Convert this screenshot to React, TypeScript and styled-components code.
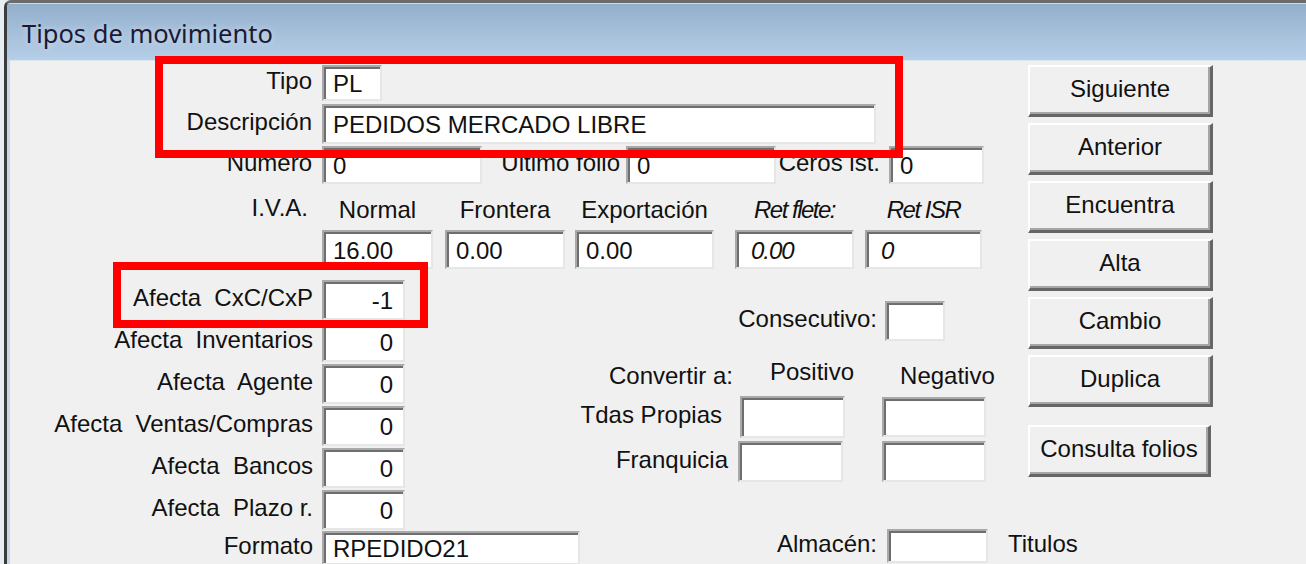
import React from "react";
import styled, { createGlobalStyle, css } from "styled-components";

const GlobalStyle = createGlobalStyle`
  html, body {
    margin: 0;
    padding: 0;
    background: #e9eef3;
  }
  #root {
    width: 1306px;
    height: 564px;
    overflow: hidden;
  }
`;

const Window = styled.div`
  margin-left: 4px;
  width: 1302px;
  height: 564px;
  overflow: hidden;
  border-top: 3px solid #6b6b6b;
  border-left: 3px solid #3c3c3c;
  border-top-left-radius: 7px;
  background: #c9d8e8;
  box-sizing: border-box;
  display: flex;
  flex-direction: column;
`;

const TitleBar = styled.div`
  height: 57px;
  flex: none;
  display: flex;
  align-items: center;
  padding-left: 15px;
  padding-top: 2px;
  box-sizing: border-box;
  background: linear-gradient(#93afcc, #a7c1dc 55%, #b6cee7);
  border-top: 1px solid #cdd9e6;
  font-family: "Noto Sans", "Open Sans", sans-serif;
  font-size: 25.5px;
  color: #1a1a36;
  text-shadow: 0 0 6px rgba(255, 255, 255, 0.5);
`;

const Body = styled.div`
  flex: 1;
  margin-left: 3px;
  background: #f0f0f0;
  border-top: 1px solid #dde6ef;
  display: flex;
  position: relative;
  font-family: "Liberation Sans", Arial, sans-serif;
  font-size: 24px;
  color: #111111;
`;

const FormArea = styled.div`
  width: 1018px;
  flex: none;
  display: flex;
  flex-direction: column;
`;

const Row = styled.div<{ $h: number; $mt?: number }>`
  display: flex;
  align-items: center;
  height: ${(p) => p.$h}px;
  margin-top: ${(p) => p.$mt ?? 0}px;
  flex: none;
`;

const Label = styled.div<{ $w: number; $ml?: number; $mr?: number; $dy?: number }>`
  width: ${(p) => p.$w}px;
  margin-left: ${(p) => p.$ml ?? 0}px;
  margin-right: ${(p) => p.$mr ?? 0}px;
  text-align: right;
  white-space: pre;
  flex: none;
  position: relative;
  top: ${(p) => p.$dy ?? -2}px;
`;

const Plain = styled.div<{ $ml?: number; $dy?: number }>`
  margin-left: ${(p) => p.$ml ?? 0}px;
  white-space: pre;
  flex: none;
  position: relative;
  top: ${(p) => p.$dy ?? -2}px;
`;

const Field = styled.div<{
  $w: number;
  $h?: number;
  $ml?: number;
  $right?: boolean;
  $italic?: boolean;
}>`
  width: ${(p) => p.$w}px;
  height: ${(p) => p.$h ?? 40}px;
  margin-left: ${(p) => p.$ml ?? 0}px;
  flex: none;
  box-sizing: border-box;
  background: #ffffff;
  border-top: 2px solid #a9a9a9;
  border-left: 2px solid #a9a9a9;
  border-right: 2px solid #e6e6e6;
  border-bottom: 2px solid #e6e6e6;
  box-shadow: inset 2px 2px 0 #6e6e6e;
  display: flex;
  align-items: center;
  justify-content: ${(p) => (p.$right ? "flex-end" : "flex-start")};
  padding: 2px ${(p) => (p.$right ? 10 : 0)}px 0 ${(p) => (p.$right ? 0 : 9)}px;
  white-space: pre;
  overflow: hidden;
  ${(p) =>
    p.$italic &&
    css`
      font-style: italic;
      letter-spacing: -1px;
      padding-left: 14px;
    `}
`;

const IvaBlock = styled.div`
  display: flex;
  margin-top: 10px;
  flex: none;
`;

const IvaColumn = styled.div<{ $w: number; $ml?: number }>`
  width: ${(p) => p.$w}px;
  margin-left: ${(p) => p.$ml ?? 0}px;
  display: flex;
  flex-direction: column;
  align-items: center;
  flex: none;
`;

const IvaHead = styled.div<{ $italic?: boolean }>`
  height: 32px;
  margin-bottom: 4px;
  display: flex;
  align-items: center;
  white-space: pre;
  ${(p) =>
    p.$italic &&
    css`
      font-style: italic;
      letter-spacing: -1.5px;
    `}
`;

const IvaLabelCell = styled.div`
  width: 298px;
  margin-right: 14px;
  height: 32px;
  display: flex;
  align-items: center;
  justify-content: flex-end;
`;

const Lower = styled.div`
  display: flex;
  margin-top: 10px;
  flex: none;
`;

const LeftCol = styled.div`
  width: 570px;
  flex: none;
  display: flex;
  flex-direction: column;
`;

const RightCol = styled.div`
  width: 430px;
  flex: none;
  display: flex;
  flex-direction: column;
`;

const ButtonCol = styled.div`
  display: flex;
  flex-direction: column;
  gap: 6px;
  padding-top: 4px;
`;

const Button = styled.div<{ $mt?: number; $w?: number }>`
  width: ${(p) => p.$w ?? 185}px;
  height: 52px;
  margin-top: ${(p) => p.$mt ?? 0}px;
  box-sizing: border-box;
  background: #f0f0f0;
  border-top: 2px solid #ffffff;
  border-left: 2px solid #ffffff;
  border-right: 3px solid #666666;
  border-bottom: 3px solid #666666;
  box-shadow: inset -2px -2px 0 #a6a6a6;
  display: flex;
  align-items: center;
  justify-content: center;
  padding-bottom: 4px;
  white-space: pre;
`;

const Annotation = styled.div<{ $x: number; $y: number; $w: number; $h: number }>`
  position: absolute;
  left: ${(p) => p.$x}px;
  top: ${(p) => p.$y}px;
  width: ${(p) => p.$w}px;
  height: ${(p) => p.$h}px;
  box-sizing: border-box;
  border: 8px solid #ff0000;
  pointer-events: none;
`;

const afectaRows: [string, string][] = [
  ["Afecta  CxC/CxP", "-1"],
  ["Afecta  Inventarios", "0"],
  ["Afecta  Agente", "0"],
  ["Afecta  Ventas/Compras", "0"],
  ["Afecta  Bancos", "0"],
  ["Afecta  Plazo r.", "0"],
];

const buttons = ["Siguiente", "Anterior", "Encuentra", "Alta", "Cambio", "Duplica"];

export default function App() {
  return (
    <>
      <GlobalStyle />
      <Window>
        <TitleBar>Tipos de movimiento</TitleBar>
        <Body>
          <FormArea>
            <Row $h={36} $mt={4}>
              <Label $w={302} $mr={10}>Tipo</Label>
              <Field $w={60} $h={36}>PL</Field>
            </Row>
            <Row $h={40} $mt={3}>
              <Label $w={302} $mr={10}>Descripción</Label>
              <Field $w={554}>PEDIDOS MERCADO LIBRE</Field>
            </Row>
            <Row $h={38} $mt={2}>
              <Label $w={302} $mr={10}>Número</Label>
              <Field $w={160} $h={38}>0</Field>
              <Label $w={138} $mr={6}>Ultimo folio</Label>
              <Field $w={150} $h={38}>0</Field>
              <Label $w={104} $mr={9}>Ceros ist.</Label>
              <Field $w={95} $h={38}>0</Field>
            </Row>
            <IvaBlock>
              <IvaLabelCell>
                <Plain>I.V.A.</Plain>
              </IvaLabelCell>
              <IvaColumn $w={111}>
                <IvaHead>Normal</IvaHead>
                <Field $w={111} $h={39}>16.00</Field>
              </IvaColumn>
              <IvaColumn $w={120} $ml={12}>
                <IvaHead>Frontera</IvaHead>
                <Field $w={120} $h={39}>0.00</Field>
              </IvaColumn>
              <IvaColumn $w={139} $ml={10}>
                <IvaHead>Exportación</IvaHead>
                <Field $w={139} $h={39}>0.00</Field>
              </IvaColumn>
              <IvaColumn $w={119} $ml={21}>
                <IvaHead $italic>Ret flete:</IvaHead>
                <Field $w={119} $h={39} $italic>0.00</Field>
              </IvaColumn>
              <IvaColumn $w={117} $ml={11}>
                <IvaHead $italic>Ret ISR</IvaHead>
                <Field $w={117} $h={39} $italic>0</Field>
              </IvaColumn>
            </IvaBlock>
            <Lower>
              <LeftCol>
                {afectaRows.map(([label, value]) => (
                  <Row key={label} $h={42}>
                    <Label $w={303} $mr={9}>{label}</Label>
                    <Field $w={83} $right>{value}</Field>
                  </Row>
                ))}
                <Row $h={34}>
                  <Label $w={303} $mr={9}>Formato</Label>
                  <Field $w={258} $h={34}>RPEDIDO21</Field>
                </Row>
              </LeftCol>
              <RightCol>
                <Row $h={40} $mt={22}>
                  <Label $w={297} $mr={8}>Consecutivo:</Label>
                  <Field $w={60} />
                </Row>
                <Row $h={34} $mt={20}>
                  <Label $w={153}>Convertir a:</Label>
                  <Plain $ml={37} $dy={-6}>Positivo</Plain>
                  <Plain $ml={46}>Negativo</Plain>
                </Row>
                <Row $h={42} $mt={1}>
                  <Label $w={142} $mr={18}>Tdas Propias</Label>
                  <Field $w={105} $h={42} />
                  <Field $w={104} $h={40} $ml={37} />
                </Row>
                <Row $h={41} $mt={3}>
                  <Label $w={148} $mr={10}>Franquicia</Label>
                  <Field $w={105} $h={41} />
                  <Field $w={104} $h={41} $ml={39} />
                </Row>
                <Row $h={34} $mt={47}>
                  <Label $w={297} $mr={10}>Almacén:</Label>
                  <Field $w={101} $h={34} />
                  <Plain $ml={20}>Titulos</Plain>
                </Row>
              </RightCol>
            </Lower>
          </FormArea>
          <ButtonCol>
            {buttons.map((b) => (
              <Button key={b}>{b}</Button>
            ))}
            <Button $mt={12} $w={183}>Consulta folios</Button>
          </ButtonCol>
          <Annotation $x={145} $y={-5} $w={748} $h={102} />
          <Annotation $x={103} $y={201} $w={315} $h={66} />
        </Body>
      </Window>
    </>
  );
}
